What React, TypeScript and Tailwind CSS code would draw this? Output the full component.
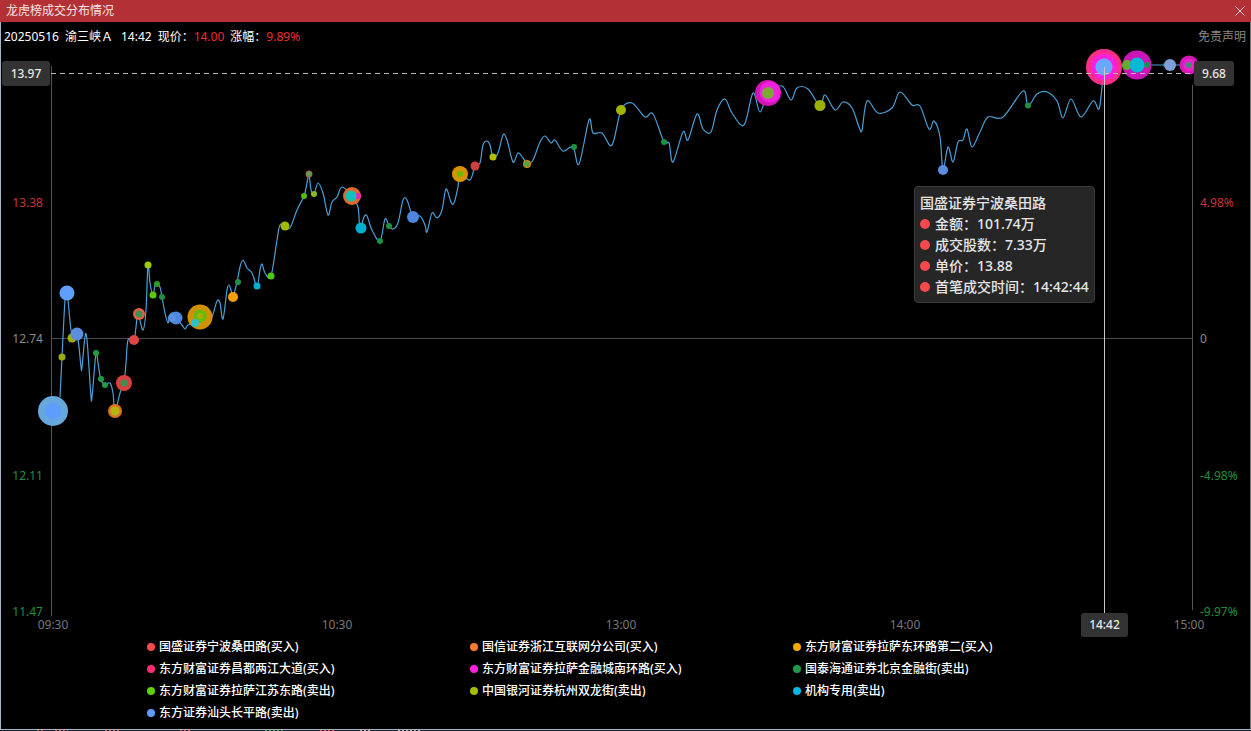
// line trace, page coordinates
const LINE: [number, number][] = [
    [60, 397], [62, 357], [65, 300], [67, 293], [68, 300], [71, 330], [74, 338], [78, 340], [81, 367], [82, 367], [85, 337], [87, 340],
    [90.7, 393], [92, 397], [96, 353], [98, 363], [100.7, 379], [105, 385], [110, 383], [113, 393], [115, 411], [120, 393],
    [124, 383], [126, 363], [128, 340], [134, 340], [136, 327], [138, 314], [143, 330], [146, 310], [148, 265], [150, 283],
    [153, 295], [155, 285], [157, 284], [160, 287], [162, 297], [165, 313], [168, 323], [170, 315], [173, 313], [176, 318],
    [182, 325], [185, 329], [188, 325], [195, 323], [200, 317], [207, 323], [212, 317], [217, 301], [220, 303], [223, 319],
    [227, 290], [229, 285], [231, 290], [233, 297], [237, 282], [240, 267], [243, 260], [247, 268], [252, 273], [257, 286],
    [260, 270], [262, 264], [265, 273], [271, 276], [277, 240], [280, 225], [285, 226], [290, 228], [297, 210], [304, 196],
    [307, 183], [309, 175], [311, 190], [314, 194], [318, 183], [323, 193], [328, 215], [332, 202], [337, 197], [342, 187],
    [352, 196], [358, 207], [360, 228], [364, 217], [367, 216], [372, 230], [380, 241], [385, 219], [389, 226], [393, 229],
    [398, 223], [403, 200], [407, 200], [413, 217], [420, 216], [425, 225], [427, 232], [432, 213], [437, 218], [442, 210],
    [446, 189], [451, 202], [454, 203], [458, 187], [460, 174], [470, 180], [475, 166], [480, 163], [483, 145], [487, 141],
    [490, 145], [493, 157], [498, 153], [503, 135], [507, 140], [513, 162], [518, 153], [523, 158], [527, 164],
    [533, 160], [540, 142], [545, 136], [551, 143], [555, 140], [563, 151], [573, 147], [579, 164], [589, 120], [593, 133],
    [602, 133], [612, 145], [621, 110], [632, 103], [645, 117], [653, 114], [664, 142], [669, 143], [673, 162], [683, 132],
    [688, 140], [697, 114], [703, 129], [711, 132], [717, 110], [725, 99], [732, 113], [744, 125], [753, 93], [760, 112],
    [768, 93], [782, 86], [791, 100], [797, 88], [808, 89], [820, 106], [825, 95], [835, 110], [843, 102], [852, 108],
    [859, 127], [862, 130], [867, 101], [878, 113], [892, 108], [900, 92], [912, 105], [920, 106], [929, 129], [934, 121],
    [940, 137], [943, 170], [948, 147], [953, 162], [958, 142], [963, 140], [967, 129], [972, 147], [980, 132], [988, 117],
    [1003, 117], [1023, 91], [1028, 106], [1037, 94], [1047, 92], [1057, 101], [1063, 118], [1071, 99], [1081, 117],
    [1093, 101], [1099, 109], [1102, 87], [1104, 67],
];

// [x, y, r, colour]; later ones paint on top
const DOTS: [number, number, number, string][] = [
    [53, 411, 15, '#66a8dc'], [53, 411, 8, '#5f9cff'],
    [62, 357, 3.5, '#9aaa10'], [67, 293, 7.5, '#5f9fff'], [72, 338, 4.5, '#a0b000'], [77, 334, 6.5, '#5a8fe0'],
    [96, 353, 3, '#229a4e'], [101, 379, 3, '#1f9a4a'], [105, 385, 3, '#1f9a4a'],
    [115, 411, 7, '#e07028'], [115, 411, 4.5, '#b0b810'],
    [124, 383, 8, '#d94040'], [124, 383, 3.5, '#3f8f50'], [134, 340, 5, '#e04545'],
    [139, 314, 6, '#e56040'], [139, 314, 3.5, '#3f9050'],
    [148, 265, 3.5, '#9ecb00'], [153, 295, 3.5, '#55cc0a'], [157, 284, 3, '#2da020'], [162, 297, 3, '#209040'],
    [176, 318, 6.5, '#4f85dd'], [172, 318, 4, '#5a8fe0'],
    [200, 317, 12.5, '#d09000'], [200, 316, 6.5, '#66bb0a'], [200, 316, 3, '#a0b010'], [195, 323, 4, '#2cc0c8'],
    [233, 297, 5, '#f59f0a'], [238, 282, 3, '#22904a'], [257, 286, 3.5, '#00aed0'], [271, 276, 3.5, '#52c80a'],
    [285, 226, 4.5, '#a0b800'], [304, 196, 3, '#55bb10'], [309, 174, 3.5, '#b85040'], [309, 174, 2.8, '#5e9a50'], [314, 194, 3, '#8ab820'],
    [352, 196, 9, '#dc6a28'], [358, 196, 3, '#f020c0'], [351, 196, 5.5, '#12c0c0'],
    [361, 228, 5.5, '#00aed0'], [380, 241, 3, '#1f9040'], [389, 226, 3, '#1f9040'], [413, 217, 6, '#4f85dd'],
    [460, 174, 8, '#d89400'], [460, 174, 3, '#66bb0a'], [475, 166, 4.5, '#cf4040'], [493, 157, 3.5, '#b0c000'],
    [527, 164, 4, '#c88a10'], [527, 164, 3, '#5aa040'],
    [574, 147, 3, '#1f9040'], [621, 110, 5, '#a0b400'], [664, 142, 3, '#1f9040'],
    [768, 93, 13, '#d015b0'], [770, 92, 10.5, '#f020e0'], [768, 93, 6, '#7cab35'],
    [820, 105.5, 5.5, '#9cb000'], [943, 170, 5, '#5a8ede'], [1028, 105.5, 3, '#1f9040'],
    [1104, 67, 18, '#ff2e8a'], [1104, 67, 13, '#ff1fe0'], [1104, 67, 8.5, '#6aa8ff'],
    [1137, 65, 14.5, '#cc15b8'], [1127, 65, 5, '#66ad2a'], [1147, 65, 3, '#209050'], [1137, 65, 7.5, '#00b8d8'],
    [1165, 65, 2, '#209050'], [1170, 65, 6, '#7d9fd8'],
    [1189, 65, 9.5, '#d518b8'], [1189, 65, 6, '#ee20d0'], [1189, 65, 3, '#40906a'],
];

const LEGEND = [
    ['国盛证券宁波桑田路(买入)', 'bg-[#f5494d]'],
    ['国信证券浙江互联网分公司(买入)', 'bg-[#ff7a2e]'],
    ['东方财富证券拉萨东环路第二(买入)', 'bg-[#f5a800]'],
    ['东方财富证券昌都两江大道(买入)', 'bg-[#ff2e72]'],
    ['东方财富证券拉萨金融城南环路(买入)', 'bg-[#ff20e0]'],
    ['国泰海通证券北京金融街(卖出)', 'bg-[#1f9a4a]'],
    ['东方财富证券拉萨江苏东路(卖出)', 'bg-[#5ed10a]'],
    ['中国银河证券杭州双龙街(卖出)', 'bg-[#a6bc00]'],
    ['机构专用(卖出)', 'bg-[#00b8e0]'],
    ['东方证券汕头长平路(卖出)', 'bg-[#5f9cff]'],
];

const TIP_ROWS = ['金额：101.74万', '成交股数：7.33万', '单价：13.88', '首笔成交时间：14:42:44'];
const PRICES = [
    ['13.38', 'text-[#c83434]'],
    ['12.74', 'text-[#8a8a8a]'],
    ['12.11', 'text-[#1f8f3f]'],
    ['11.47', 'text-[#1f8f3f]'],
];
const PCTS = [
    ['4.98%', 'text-[#c83434]'],
    ['0', 'text-[#8a8a8a]'],
    ['-4.98%', 'text-[#1f8f3f]'],
    ['-9.97%', 'text-[#1f8f3f]'],
];
const TIMES = ['09:30', '10:30', '13:00', '14:00', '15:00'];

function smoothPath(pts: [number, number][]): string {
    let d = `M${pts[0][0]} ${pts[0][1]}`;
    for (let i = 0; i < pts.length - 1; i++) {
        const p0 = pts[Math.max(i - 1, 0)];
        const p1 = pts[i];
        const p2 = pts[i + 1];
        const p3 = pts[Math.min(i + 2, pts.length - 1)];
        const c1x = p1[0] + (p2[0] - p0[0]) / 6;
        const c1y = p1[1] + (p2[1] - p0[1]) / 6;
        const c2x = p2[0] - (p3[0] - p1[0]) / 6;
        const c2y = p2[1] - (p3[1] - p1[1]) / 6;
        d += `C${c1x.toFixed(1)} ${c1y.toFixed(1)} ${c2x.toFixed(1)} ${c2y.toFixed(1)} ${p2[0]} ${p2[1]}`;
    }
    return d;
}

function ChartDrawing() {
    return (
        <svg className="absolute left-0 top-0 overflow-visible" width="1251" height="586" viewBox="0 50 1251 586">
            <line x1="51.5" y1="66" x2="51.5" y2="616" stroke="#555" />
            <line x1="1192.5" y1="85" x2="1192.5" y2="610" stroke="#555" />
            <line x1="51" y1="338.5" x2="1192" y2="338.5" stroke="#4a4a4a" />
            <path d={smoothPath(LINE)} fill="none" stroke="#4b9fd6" strokeWidth="1.2" />
            <line x1="1104" y1="65" x2="1189" y2="65" stroke="#4b9fd6" strokeWidth="1.2" />
            {DOTS.map(([x, y, r, c], i) => (
                <circle key={i} cx={x} cy={y} r={r} fill={c} />
            ))}
            <line x1="51" y1="73.5" x2="1192" y2="73.5" stroke="#b8b8b8" strokeDasharray="5 4" />
            <line x1="1104.5" y1="67" x2="1104.5" y2="613" stroke="#c8c8c8" />
        </svg>
    );
}

function AxisTag({ text, className }: { text: string; className: string }) {
    return (
        <div className={`absolute flex items-center justify-center rounded-[3px] bg-[#333] font-medium text-[#e8e8e8] ${className}`}>
            {text}
        </div>
    );
}

export default function App() {
    return (
        <div className="flex h-[731px] w-full flex-col overflow-hidden bg-black font-['Noto_Sans','Noto_Sans_CJK_SC',sans-serif] text-xs shadow-[inset_1px_0_0_#a9b4c4,inset_-1px_0_0_#777]">
            <div className="flex h-[22px] items-center justify-between bg-[#b33136] px-[6px] text-[#f4e4e4]">
                <span>龙虎榜成交分布情况</span>
                <svg width="10" height="10" viewBox="0 0 10 10" className="stroke-[#e8d0d0]">
                    <path d="M0.5 0.5L9.5 9.5M9.5 0.5L0.5 9.5" fill="none" />
                </svg>
            </div>

            <div className="flex h-[28px] items-center gap-[6px] pl-[4px] pr-[5px] pt-[2px] text-white">
                <span>20250516</span>
                <span>渝三峡Ａ</span>
                <span className="ml-[2px]">14:42</span>
                <span>
                    现价：<span className="text-[#f02a2a]">14.00</span>
                </span>
                <span>
                    涨幅：<span className="text-[#f02a2a]">9.89%</span>
                </span>
                <span className="ml-auto text-[#888]">免责声明</span>
            </div>

            <div className="relative h-[586px] shrink-0 leading-4">
                <ChartDrawing />

                <div className="absolute left-0 top-[145px] flex w-[43px] flex-col items-end gap-[120.3px]">
                    {PRICES.map(([v, c]) => (
                        <span key={v} className={c}>{v}</span>
                    ))}
                </div>
                <div className="absolute left-[1200px] top-[145px] flex flex-col gap-[120.3px]">
                    {PCTS.map(([v, c]) => (
                        <span key={v} className={c}>{v}</span>
                    ))}
                </div>
                <div className="absolute left-[23px] top-[567px] flex gap-[224px] text-[#777]">
                    {TIMES.map((t) => (
                        <span key={t} className="w-[60px] text-center">{t}</span>
                    ))}
                </div>

                <AxisTag text="13.97" className="left-[2px] top-[11px] h-[25px] w-[48px]" />
                <AxisTag text="9.68" className="left-[1194px] top-[11px] h-[25px] w-[40px]" />
                <AxisTag text="14:42" className="left-[1081px] top-[563px] h-[24px] w-[47px]" />

                <div className="absolute left-[914px] top-[136px] h-[117px] w-[181px] rounded-[4px] border border-[#3a3a3a] bg-[#262626] pl-[5px] pt-[5px] text-sm font-medium leading-[21px] text-[#e6e6e6]">
                    <div>国盛证券宁波桑田路</div>
                    {TIP_ROWS.map((row) => (
                        <div key={row} className="flex items-center gap-[5px]">
                            <span className="h-[10px] w-[10px] rounded-full bg-[#f5494d]" />
                            <span className="whitespace-nowrap">{row}</span>
                        </div>
                    ))}
                </div>
            </div>

            <div className="grid h-[88px] shrink-0 grid-cols-[323px_323px_323px] grid-rows-4 pl-[147px] font-medium text-white">
                {LEGEND.map(([name, dot]) => (
                    <div key={name} className="flex items-center gap-[4px]">
                        <span className={`h-[8px] w-[8px] rounded-full ${dot}`} />
                        <span>{name}</span>
                    </div>
                ))}
            </div>

            <div className="flex-1" />
            <div className="h-px bg-[#aab2bc]" />
            <svg className="block shrink-0" width="1251" height="1" viewBox="0 0 1251 1">
                <rect width="1251" height="1" fill="#0f2238" />
                <path d="M37 .5h8M55 .5h13M105 .5h15M180 .5h12M320 .5h14" stroke="#d05050" strokeDasharray="2 2" />
                <path d="M265 .5h20" stroke="#3aa050" strokeDasharray="2 2" />
                <path d="M360 .5h10M398 .5h22" stroke="#b0b0b0" strokeDasharray="2 2" />
            </svg>
        </div>
    );
}
